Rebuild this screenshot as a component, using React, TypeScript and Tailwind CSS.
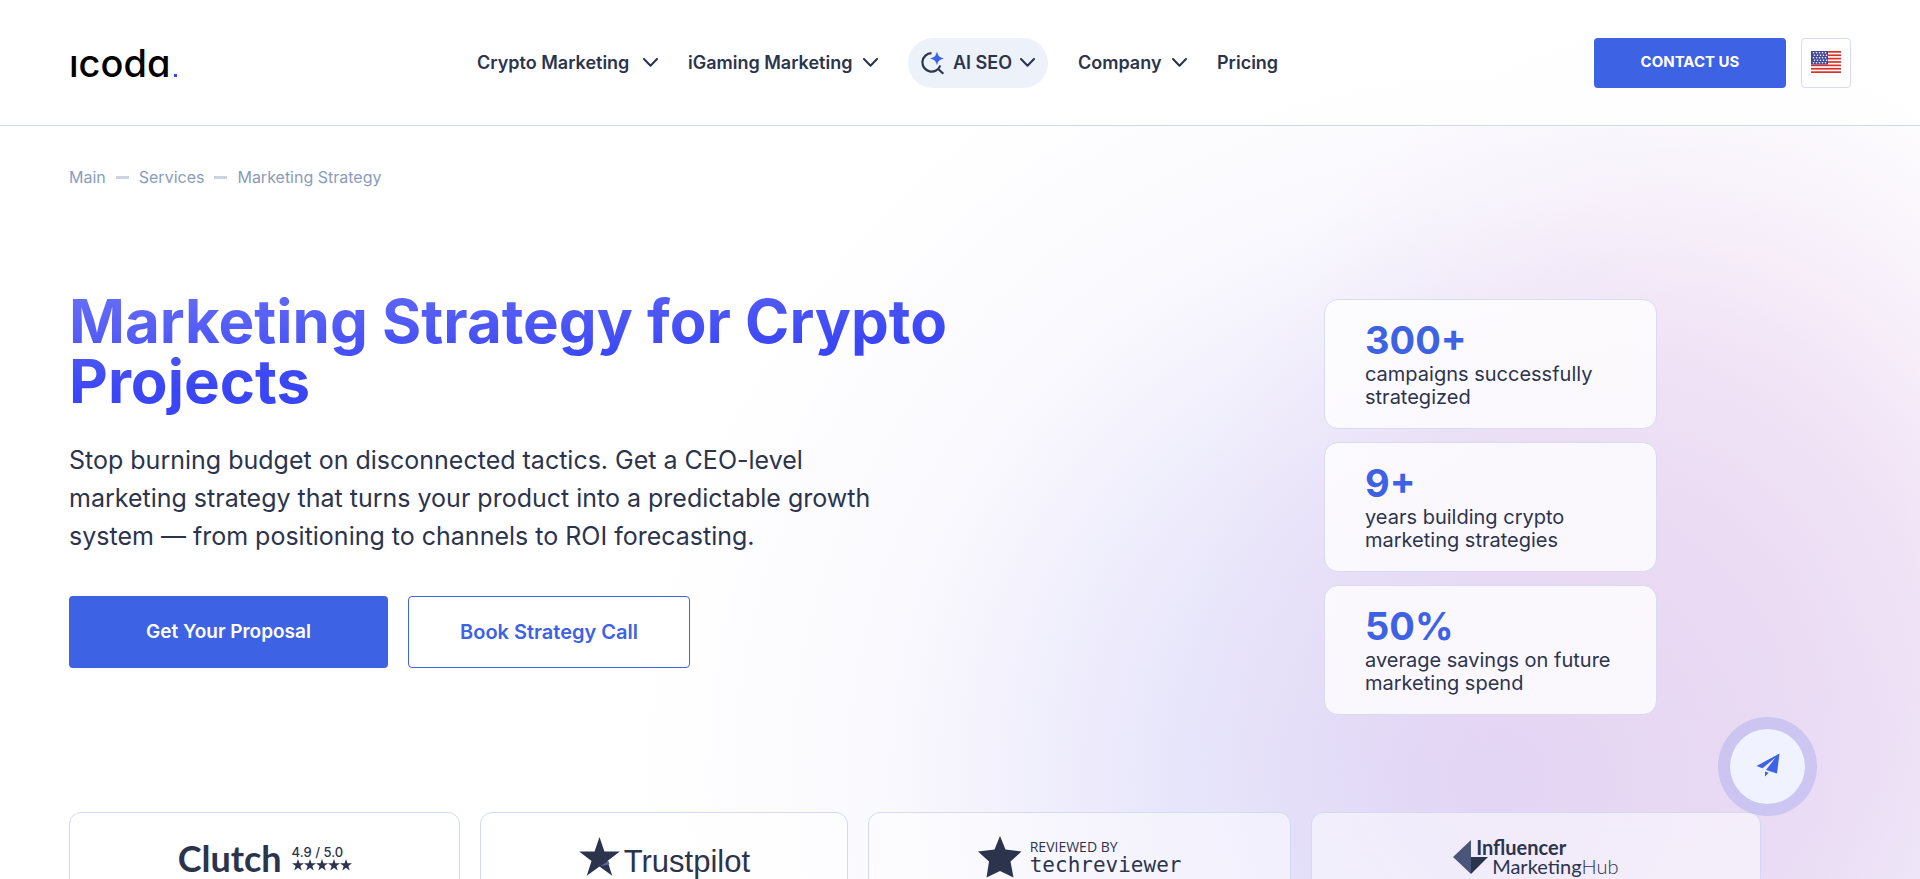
import { useState } from 'react';

const navItems = [
  { label: 'Crypto Marketing', menu: true, width: 'w-[181px]' },
  { label: 'iGaming Marketing', menu: true, width: 'w-[190px]' },
  { label: 'AI SEO', menu: true, highlight: true, width: 'w-[140px]' },
  { label: 'Company', menu: true, width: 'w-[109px]' },
  { label: 'Pricing', menu: false, width: 'w-[61px]' },
];

const stats = [
  { value: '300+', lines: ['campaigns successfully', 'strategized'] },
  { value: '9+', lines: ['years building crypto', 'marketing strategies'] },
  { value: '50%', lines: ['average savings on future', 'marketing spend'] },
];

const STAR = 'M12 0l2.9 8.6H24l-7.3 5.5 2.8 8.7L12 17.4l-7.5 5.4 2.8-8.7L0 8.6h9.1z';

function Chevron() {
  return (
    <svg className="w-[15px] h-[9px] shrink-0" viewBox="0 0 15 9" fill="none" stroke="currentColor" strokeWidth="2" strokeLinecap="round" strokeLinejoin="round">
      <path d="M1 1l6.5 6.8L14 1" />
    </svg>
  );
}

function SearchSpark() {
  return (
    <svg className="w-6 h-6 shrink-0" viewBox="0 0 24 24" fill="none">
      <path d="M10.500 2.200a9.200 9.200 0 1 0 8.800 12.300M17 17.800l5.300 5" stroke="#2c344d" strokeWidth="2.2" />
      <path d="M16 0.500c1.200 4.600 2.300 5.700 7 6.900-4.700 1.200-5.800 2.300-7 6.900-1.200-4.600-2.300-5.700-7-6.900 4.700-1.200 5.800-2.300 7-6.900z" fill="#3d62e3" />
    </svg>
  );
}

function UsFlag() {
  return (
    <svg className="w-[30px] h-[22px]" viewBox="0 0 30 22">
      <rect width="30" height="22" fill="#fff" />
      {[0, 1, 2, 3, 4, 5, 6].map((i) => (
        <rect key={i} y={i * 3.38} width="30" height="1.7" fill="#d9302c" />
      ))}
      <rect width="17" height="13.500" fill="#41479b" />
      {[2, 4.5, 7, 9.5, 12].map((y, r) =>
        [2.5, 5.5, 8.5, 11.5, 14.5].map((x) => (
          <circle key={`${x}-${y}`} cx={r % 2 ? x + 1 : x} cy={y - 0.2} r="0.8" fill="#fff" />
        ))
      )}
    </svg>
  );
}

function Header() {
  return (
    <header className="flex items-center justify-between h-[126px] px-[69px] bg-white/85 border-b border-[#d0d8ec]">
      <a href="#" aria-label="icoda" className="flex items-baseline w-[408px] text-[38px] leading-[48px] font-medium text-black [font-feature-settings:'cv11']">
        ıcoda<span className="w-[3px] h-[3px] ml-1 bg-[#3a42f5]" />
      </a>

      <nav className="flex items-center gap-[30px] mr-auto">
        {navItems.map((item) => (
          <a
            key={item.label}
            href="#"
            className={`flex items-center justify-between h-[50px] text-[18px] font-semibold whitespace-nowrap text-[#2c344d] ${item.width} ${item.highlight ? 'px-[13px] rounded-full bg-[#ecf1fa]' : ''}`}
          >
            {item.highlight && <SearchSpark />}
            {item.label}
            {item.menu && <Chevron />}
          </a>
        ))}
      </nav>

      <div className="flex items-center gap-[15px]">
        <button className="w-48 h-[50px] rounded-[4px] bg-[#3d62e3] text-[15px] font-bold text-white">CONTACT US</button>
        <button aria-label="Language" className="flex items-center justify-center w-[50px] h-[50px] pb-[2px] rounded-[4px] bg-white border border-[#d6daf3]">
          <UsFlag />
        </button>
      </div>
    </header>
  );
}

function Breadcrumbs() {
  return (
    <nav className="flex items-center gap-[10px] pt-[39px] text-[16px] leading-6 text-[#8b9cbb]">
      <a href="#">Main</a>
      <span className="w-[13px] h-[3px] bg-[#ccd4e2]" />
      <a href="#">Services</a>
      <span className="w-[13px] h-[3px] bg-[#ccd4e2]" />
      <span>Marketing Strategy</span>
    </nav>
  );
}

function Partners() {
  return (
    <div className="grid grid-cols-[391fr_368fr_422fr_450fr] gap-5 w-[calc(100%-90px)] mt-[97px] text-[#2c344d]">
      <a href="#" className="flex items-center justify-center gap-[10px] h-[92px] rounded-xl border border-[#d3daf4] bg-white/50">
        <span className="font-['Lato'] text-[36px] leading-10 font-bold">Clutch</span>
        <span className="flex flex-col">
          <span className="text-[13px] leading-[14px] font-medium">4.9 / 5.0</span>
          <span className="flex">
            {[0, 1, 2, 3, 4].map((i) => (
              <svg key={i} className="w-3 h-3" viewBox="0 0 24 24" fill="currentColor"><path d={STAR} /></svg>
            ))}
          </span>
        </span>
      </a>

      <a href="#" className="flex items-center justify-center gap-1 h-[92px] rounded-xl border border-[#d3daf4] bg-white/50">
        <svg className="w-[41px] h-[39px] mb-1" viewBox="0 0 24 23">
          <path d={STAR} fill="#2c344d" />
          <path d="M17.300 14.200l.6 1.900L12 17.400z" fill="#5b6799" />
        </svg>
        <span className="pt-2 font-['Liberation_Sans'] text-[31px] leading-8">Trustpilot</span>
      </a>

      <a href="#" className="flex items-center justify-center gap-2 h-[92px] pb-[2px] rounded-xl border border-[#d3daf4] bg-white/50">
        <svg className="w-11 h-[42px]" viewBox="0 0 44 42" fill="currentColor">
          <path d="M22 0l5.500 13.500L43.500 15.500 32.500 25.500 35.500 41.500 22 35 8.500 41.500 11 25.500 0 15.500l16.500-2z" />
        </svg>
        <span className="flex flex-col">
          <span className="font-['Open_Sans'] text-[14px] leading-4">REVIEWED BY</span>
          <span className="font-['DejaVu_Sans_Mono'] text-[21px] leading-5">techreviewer</span>
        </span>
      </a>

      <a href="#" className="flex items-center justify-center h-[92px] pb-[2px] rounded-xl border border-[#d3daf4] bg-white/50">
        <svg className="w-[35px] h-[34px]" viewBox="0 0 35 34">
          <path d="M18 0v34L0 17z" fill="#4a5679" />
          <path d="M18 17h17L18 34z" fill="#2c344d" />
        </svg>
        <span className="flex flex-col -ml-3 font-['Lato'] text-[20px] leading-[19px]">
          <span className="font-bold">Influencer</span>
          <span className="pl-4">Marketing<span className="font-light">Hub</span></span>
        </span>
      </a>
    </div>
  );
}

export default function App() {
  const [chatOpen, setChatOpen] = useState(false);

  return (
    <div className="min-h-screen overflow-hidden font-['Inter',sans-serif] text-[#2c344d] bg-white bg-[radial-gradient(ellipse_26%_66%_at_88%_68%,rgba(238,208,236,0.5),rgba(238,208,236,0.4)_45%,rgba(238,208,236,0.12)_80%,rgba(238,208,236,0)),radial-gradient(ellipse_45%_92%_at_78%_86%,rgba(207,202,246,0.75),rgba(207,202,246,0.48)_38%,rgba(207,202,246,0.12)_70%,rgba(207,202,246,0))]">
      <Header />

      <main className="px-[69px]">
        <Breadcrumbs />

        <section className="flex justify-between pt-[102px]">
          <div className="w-[900px]">
            <h1 className="pb-2 text-[60px] leading-[60px] font-bold whitespace-nowrap text-transparent bg-clip-text bg-[linear-gradient(176deg,#6a70f6_0%,#3a46f5_55%)]">
              Marketing Strategy for Crypto<br />Projects
            </h1>
            <p className="mt-[22px] text-[25px] leading-[38px] whitespace-nowrap">
              Stop burning budget on disconnected tactics. Get a CEO-level<br />
              marketing strategy that turns your product into a predictable growth<br />
              system — from positioning to channels to ROI forecasting.
            </p>
            <div className="flex gap-5 mt-[41px]">
              <button className="w-[319px] h-[72px] rounded-[4px] bg-[#3d62e3] text-[19px] font-semibold text-white">Get Your Proposal</button>
              <button className="w-[282px] h-[72px] rounded-[4px] border border-[#3d62e3] bg-white text-[20px] font-semibold text-[#3d62e3]">Book Strategy Call</button>
            </div>
          </div>

          <div className="flex flex-col gap-[13px] w-[333px] mr-[194px] pt-2">
            {stats.map((stat) => (
              <div key={stat.value} className="h-[130px] pt-5 pl-10 rounded-[14px] border border-[#d6dcf3] bg-white/80">
                <div className="text-[38px] leading-10 font-bold text-[#3d62e3]">{stat.value}</div>
                <p className="mt-[3px] text-[20px] leading-[23px] whitespace-nowrap">
                  {stat.lines[0]}<br />{stat.lines[1]}
                </p>
              </div>
            ))}
          </div>
        </section>

        <Partners />
      </main>

      <button
        aria-label="Open chat"
        aria-expanded={chatOpen}
        onClick={() => setChatOpen(!chatOpen)}
        className="fixed right-[103px] bottom-[63px] flex items-center justify-center w-[99px] h-[99px] rounded-full border-12 border-[#9fa4ee]/40 bg-[#f0f3ff] bg-clip-padding"
      >
        <svg className="w-6 h-6 mb-1" viewBox="0 0 24 24" fill="#3d62e3">
          <path d="M23.500 0.500L0.500 13l6 2.300L19.500 4.500 10 17l11 3.500zM9 18.500v5l3.700-3.800z" />
        </svg>
      </button>
    </div>
  );
}
